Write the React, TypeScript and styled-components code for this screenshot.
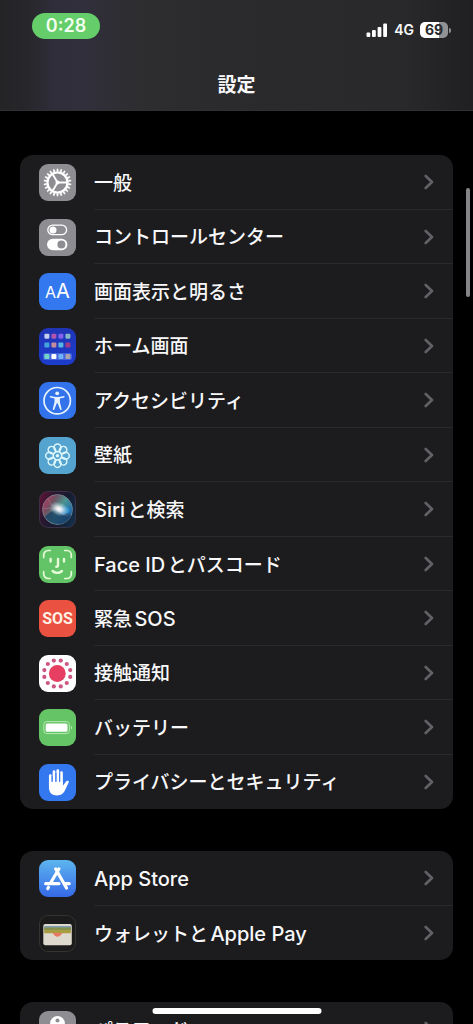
import React from "react";
import styled, { createGlobalStyle } from "styled-components";

const GlobalStyle = createGlobalStyle`
  * { box-sizing: border-box; }
  body {
    margin: 0;
    background: #000;
    color: #f8f8fa;
    font-family: Inter, "Noto Sans CJK JP", sans-serif;
    overflow: hidden;
  }
`;

const Screen = styled.div`
  position: relative;
  display: flex;
  flex-direction: column;
  height: 100vh;
  overflow: hidden;
`;

const Header = styled.header`
  flex: none;
  padding: 13px 22px 11px 32px;
  border-bottom: 1px solid #303033;
  background: linear-gradient(
    90deg,
    #242427 0%,
    #27272b 6%,
    #2e2d39 11%,
    #312f3c 17%,
    #2f2e34 24%,
    #2d2d2f 32%,
    #2a2a2c 55%,
    #29292b 85%,
    #202022 100%
  );
`;

const StatusBar = styled.div`
  display: flex;
  align-items: center;
  justify-content: space-between;
`;

const TimePill = styled.time`
  width: 68px;
  border-radius: 13px;
  background: #65cd69;
  color: #f2fff0;
  font-size: 18px;
  font-weight: 600;
  line-height: 26px;
  text-align: center;
`;

const StatusIcons = styled.div`
  display: flex;
  align-items: center;
  gap: 6px;
  padding-top: 8px;
  font-size: 14px;
  font-weight: 600;
  line-height: 18px;
`;

const Battery = styled.div`
  display: flex;
  align-items: center;
  gap: 1px;
`;

const BatteryLevel = styled.span`
  width: 28px;
  border-radius: 5px;
  background: linear-gradient(90deg, #fff 69%, #929294 69%);
  color: #29292b;
  font-weight: 700;
  line-height: 16px;
  text-align: center;
`;

const BatteryTip = styled.span`
  width: 2px;
  height: 5px;
  border-radius: 0 2px 2px 0;
  background: #929294;
`;

const Title = styled.h1`
  margin: 34px 10px 0 0;
  font-size: 19px;
  font-weight: 700;
  line-height: 26px;
  text-align: center;
`;

const Content = styled.main`
  display: flex;
  flex: 1;
  flex-direction: column;
  gap: 42px;
  min-height: 0;
  overflow: hidden;
  padding: 44px 20px 0;
`;

const Group = styled.ul`
  flex: none;
  margin: 0;
  padding: 0;
  border-radius: 13px;
  background: #1c1c1e;
  list-style: none;
  overflow: hidden;
`;

const Item = styled.li`
  height: 55px;

  &:nth-child(even) {
    height: 54px;
  }
`;

const RowLink = styled.a`
  display: flex;
  align-items: center;
  gap: 18px;
  height: 100%;
  padding-left: 19px;
  color: inherit;
  text-decoration: none;
`;

const RowBody = styled.span`
  display: flex;
  flex: 1;
  align-items: center;
  justify-content: space-between;
  height: 100%;
  padding-right: 19px;
  border-bottom: 1px solid #29292b;

  li:last-child & {
    border-bottom-color: transparent;
  }
`;

const Label = styled.span`
  padding-top: 3px;
  font-size: 19px;
  font-weight: 500;
  line-height: 28px;
  white-space: nowrap;
  text-autospace: normal;
`;

const Latin = styled.span`
  font-size: 20px;
`;

const Tile = styled.span<{ $bg: string; $edge?: string }>`
  flex: none;
  width: 37px;
  height: 37px;
  border-radius: 9px;
  background: ${(p) => p.$bg};
  box-shadow: ${(p) => (p.$edge ? `inset 0 0 0 1px ${p.$edge}` : "none")};
  overflow: hidden;

  svg {
    display: block;
  }
`;

const TileText = styled.span`
  display: flex;
  align-items: baseline;
  justify-content: center;
  color: #fff;
  line-height: 37px;
`;

const Sos = styled(TileText)`
  color: #fff0e4;
  font-family: Roboto, sans-serif;
  font-size: 16px;
  font-weight: 700;
`;

const SmallA = styled.span`
  font-size: 16px;
`;

const LargeA = styled.span`
  font-size: 20px;
`;

const ScrollThumb = styled.div`
  position: absolute;
  top: 188px;
  right: 3px;
  width: 4px;
  height: 109px;
  border-radius: 2px;
  background: #858587;
`;

const HomeIndicator = styled.div`
  position: absolute;
  bottom: 10px;
  left: 50%;
  width: 169px;
  height: 6px;
  border-radius: 3px;
  background: #fff;
  transform: translateX(-50%);
`;

const Drawing = ({ children }: { children: React.ReactNode }) => (
  <svg width="37" height="37" viewBox="0 0 37 37" fill="none" aria-hidden="true">
    {children}
  </svg>
);

const ring = (count: number, radius: number, cx = 18.5, cy = 18.5) =>
  Array.from({ length: count }, (_, i) => {
    const a = ((i + 0.5) * 2 * Math.PI) / count;
    return { x: cx + radius * Math.cos(a), y: cy + radius * Math.sin(a) };
  });

const GeneralIcon = () => (
  <Tile $bg="#8d8d92">
    <Drawing>
      {ring(22, 1).map((_, i) => (
        <path
          key={i}
          d="M17.7 7.6 18 4.9h1l.3 2.7z"
          fill="#fff"
          stroke="#fff"
          strokeWidth=".5"
          transform={`rotate(${(i * 360) / 22} 18.5 18.5)`}
        />
      ))}
      <circle cx="18.5" cy="18.5" r="10" stroke="#fff" strokeWidth="2.2" />
      <path d="M18.5 18.5H28M18.5 18.5 13.6 10M18.5 18.5 13.6 27" stroke="#fff" strokeWidth="1.8" />
      <circle cx="18.5" cy="18.5" r="2" fill="#fff" />
    </Drawing>
  </Tile>
);

const ControlIcon = () => (
  <Tile $bg="#8d8d92">
    <Drawing>
      <rect x="8.8" y="6.1" width="18.8" height="9.6" rx="4.8" stroke="#fff" strokeWidth="1.3" />
      <circle cx="14" cy="10.9" r="3.5" fill="#fff" />
      <rect x="8" y="19.7" width="20.4" height="11.6" rx="5.8" fill="#fff" />
      <circle cx="22.4" cy="25.5" r="4" fill="#8d8d92" />
    </Drawing>
  </Tile>
);

const DisplayIcon = () => (
  <Tile $bg="#3478f0">
    <TileText>
      <SmallA>A</SmallA>
      <LargeA>A</LargeA>
    </TileText>
  </Tile>
);

const HOME_DOTS = [
  ["#c5d0f0", "#b254ae", "#8263ee", "#85b8c7"],
  ["#42a3df", "#c48b9b", "#56b7e1", "#a13c88"],
  ["#73d6c8", "#ffffff", "#70b2f5", "#aba4ad"],
];

const HomeIcon = () => (
  <Tile $bg="linear-gradient(#2034b5, #1c3ccc)">
    <Drawing>
      <rect x="4" y="25" width="29" height="7" rx="2" fill="#4463df" />
      {HOME_DOTS.map((row, r) =>
        row.map((c, i) => (
          <rect key={`${r}-${i}`} x={5.4 + i * 7} y={[5.7, 14.5, 26][r]} width="5" height="5" rx="1.1" fill={c} />
        )),
      )}
    </Drawing>
  </Tile>
);

const AccessibilityIcon = () => (
  <Tile $bg="#3272ea">
    <Drawing>
      <circle cx="18.2" cy="18.7" r="13.2" stroke="#e4f2ff" strokeWidth="1.7" />
      <circle cx="18.2" cy="11.3" r="1.9" fill="#e4f2ff" />
      <path
        d="M11.6 14.1c2.2.6 4.4.8 6.6.8s4.4-.2 6.6-.8c.9-.2 1.2 1 .4 1.3l-4.3 1.2v3.5l1.7 7c.2 1-1.2 1.4-1.5.4l-2.5-6.3h-.8l-2.5 6.3c-.3 1-1.7.6-1.5-.4l1.7-7v-3.5l-4.3-1.2c-.8-.3-.5-1.5.4-1.3z"
        fill="#e4f2ff"
      />
    </Drawing>
  </Tile>
);

const WallpaperIcon = () => (
  <Tile $bg="#55a3cf">
    <Drawing>
      {Array.from({ length: 8 }, (_, i) => (
        <ellipse
          key={i}
          cx="18.5"
          cy="10.8"
          rx="3.5"
          ry="3.9"
          stroke="#dcf7fb"
          strokeWidth="1.5"
          transform={`rotate(${i * 45} 18.5 18.7)`}
        />
      ))}
      <circle cx="18.5" cy="18.7" r="4.2" stroke="#dcf7fb" strokeWidth="1.3" />
      <circle cx="18.5" cy="18.7" r="1.8" fill="#dcf7fb" />
    </Drawing>
  </Tile>
);

const SiriIcon = () => (
  <Tile $bg="linear-gradient(115deg, #6d1237 0%, #2b1730 30%, #151c30 60%, #113452 100%)" $edge="#3b3046">
    <Drawing>
      <defs>
        <linearGradient id="siriOrb" x1="3" y1="8" x2="34" y2="28" gradientUnits="userSpaceOnUse">
          <stop offset="0" stopColor="#c22e58" />
          <stop offset=".3" stopColor="#6b5463" />
          <stop offset=".55" stopColor="#4b9590" />
          <stop offset=".8" stopColor="#2473ac" />
          <stop offset="1" stopColor="#15477c" />
        </linearGradient>
        <radialGradient id="siriGlow">
          <stop offset="0" stopColor="#fff" />
          <stop offset=".3" stopColor="#f6f2f6" stopOpacity=".85" />
          <stop offset="1" stopColor="#a8d4df" stopOpacity="0" />
        </radialGradient>
      </defs>
      <circle cx="18.5" cy="18.5" r="15" fill="url(#siriOrb)" stroke="#798391" strokeWidth=".8" />
      <path d="M6 26c5-6 9-7 13-7s9 2 13 6c-4 7-9 8-13 8-6 0-10-3-13-7z" fill="#183d62" opacity=".8" />
      <path d="M18 19c5-5 10-5 13 0-3 6-9 6-13 0z" fill="#3295d5" opacity=".8" />
      <path d="M4 18c8-2 12 0 16 2 3 3 6 5 10 4M9 8c3 6 6 9 12 11" stroke="#c294ab" strokeWidth=".9" opacity=".4" />
      <ellipse cx="20" cy="18" rx="10" ry="7" fill="url(#siriGlow)" transform="rotate(22 20 18)" />
    </Drawing>
  </Tile>
);

const FaceIdIcon = () => (
  <Tile $bg="#62c466">
    <Drawing>
      <g stroke="#e8fbd9" strokeLinecap="round">
        <path
          d="M4.7 11.5V9a4.5 4.5 0 0 1 4.5-4.500h2M25.8 4.5h2A4.5 4.5 0 0 1 32.3 9v2.5M32.3 25.5V28a4.5 4.5 0 0 1-4.5 4.5h-2M11.2 32.5h-2A4.5 4.5 0 0 1 4.7 28v-2.5"
          strokeWidth="1.7"
        />
        <path d="M11.6 13v2.500M25 13v2.500M19 13v6.300c0 1-.5 1.500-1.700 1.500M13.600 25c2.800 2.500 6.600 2.500 9.400 0" strokeWidth="2.4" />
      </g>
    </Drawing>
  </Tile>
);

const SosIcon = () => (
  <Tile $bg="#ea5140">
    <Sos>SOS</Sos>
  </Tile>
);

const ExposureIcon = () => (
  <Tile $bg="#fff">
    <Drawing>
      <circle cx="18.3" cy="18.5" r="8.4" fill="#e63f61" />
      {ring(12, 13.4, 18.3, 18.5).map((p, i) => (
        <circle key={i} cx={p.x} cy={p.y} r="2.1" fill="#cc5582" />
      ))}
    </Drawing>
  </Tile>
);

const BatteryIcon = () => (
  <Tile $bg="#65c466">
    <Drawing>
      <rect x="4.8" y="12.6" width="25.6" height="12" rx="3" stroke="#b7e8b1" strokeWidth="1" />
      <rect x="6.7" y="14.4" width="21.8" height="8.4" rx="1.5" fill="#fff" />
      <path d="M32 16.700c1.600.6 1.600 3.200 0 3.800z" fill="#b7e8b1" />
    </Drawing>
  </Tile>
);

const PrivacyIcon = () => (
  <Tile $bg="#3478f0">
    <Drawing>
      <path d="M11.3 11.5V21M15 7.5V19M18.8 6.5V19M22.5 8.5V20" stroke="#fff" strokeWidth="2.7" strokeLinecap="round" />
      <path
        d="M9.95 17.5h13.9v4.3l3.4-4.500c.9-1.200 3.100-.7 2.500.9l-3.500 7.600c-1.800 4-4.200 5.700-8.200 5.700-5.200 0-8.100-3-8.100-8z"
        fill="#fff"
      />
      <path d="M13.15 12v6M16.9 9v9M20.65 9v9" stroke="#3478f0" strokeWidth=".9" />
    </Drawing>
  </Tile>
);

const AppStoreIcon = () => (
  <Tile $bg="linear-gradient(#5db5ee, #3569e8)">
    <Drawing>
      <path
        d="M19.900 9 12 22.300M16.700 9l10.800 19M6.700 23.700h13.200M26.300 23.700h3.900M9.500 27.300l-.7 1.200"
        stroke="#fff"
        strokeWidth="3.2"
        strokeLinecap="round"
      />
    </Drawing>
  </Tile>
);

const WalletIcon = () => (
  <Tile $bg="#1b1b1c" $edge="#343330">
    <Drawing>
      <rect x="4.3" y="9" width="28.5" height="21.3" rx="2" fill="#ddd9cf" />
      <path d="M5.2 11h26.7v3H5.2z" fill="#7e9cad" />
      <path d="M5.2 12.5h26.7v3.3H5.2z" fill="#85914d" />
      <path d="M5.2 15.2h26.7v3H5.2z" fill="#aa9d40" />
      <path d="M13.5 18.1h10c-1 .5-1.600 3.600-5 3.600s-4-3.100-5-3.600z" fill="#e87763" />
    </Drawing>
  </Tile>
);

const PasswordIcon = () => (
  <Tile $bg="#8d8d92">
    <Drawing>
      <circle cx="18.5" cy="12.5" r="7.4" fill="#fff" />
      <circle cx="18.5" cy="9.5" r="2" fill="#8d8d92" />
      <path d="M15.5 18h6v12l-3 3-3-3z" fill="#fff" />
    </Drawing>
  </Tile>
);

const Chevron = () => (
  <svg width="10" height="16" viewBox="0 0 10 16" fill="none" aria-hidden="true">
    <path d="M1.700 2 8 8l-6.300 6" stroke="#626266" strokeWidth="2.6" strokeLinecap="round" strokeLinejoin="round" />
  </svg>
);

const Signal = () => (
  <svg width="22" height="15" viewBox="0 0 22 15" fill="#fff" aria-hidden="true">
    <rect x="0.5" y="9.5" width="3.8" height="4.5" rx="1" />
    <rect x="6" y="7" width="3.8" height="7" rx="1" />
    <rect x="11.6" y="4" width="3.8" height="10" rx="1" />
    <rect x="17.2" y="0.5" width="3.8" height="13.5" rx="1" />
  </svg>
);

// Latin runs are set one size larger than the kana and kanji around them.
const MixedText = ({ text }: { text: string }) => (
  <>
    {text
      .split(/([A-Za-z][A-Za-z ]*)/)
      .filter(Boolean)
      .map((run, i) => (/^[A-Za-z]/.test(run) ? <Latin key={i}>{run}</Latin> : run))}
  </>
);

const GROUPS: { label: string; Icon: React.FC }[][] = [
  [
    { label: "一般", Icon: GeneralIcon },
    { label: "コントロールセンター", Icon: ControlIcon },
    { label: "画面表示と明るさ", Icon: DisplayIcon },
    { label: "ホーム画面", Icon: HomeIcon },
    { label: "アクセシビリティ", Icon: AccessibilityIcon },
    { label: "壁紙", Icon: WallpaperIcon },
    { label: "Siriと検索", Icon: SiriIcon },
    { label: "Face IDとパスコード", Icon: FaceIdIcon },
    { label: "緊急SOS", Icon: SosIcon },
    { label: "接触通知", Icon: ExposureIcon },
    { label: "バッテリー", Icon: BatteryIcon },
    { label: "プライバシーとセキュリティ", Icon: PrivacyIcon },
  ],
  [
    { label: "App Store", Icon: AppStoreIcon },
    { label: "ウォレットとApple Pay", Icon: WalletIcon },
  ],
  [{ label: "パスワード", Icon: PasswordIcon }],
];

export default function App() {
  return (
    <>
      <GlobalStyle />
      <Screen lang="ja">
        <Header>
          <StatusBar>
            <TimePill>0:28</TimePill>
            <StatusIcons>
              <Signal />
              <span>4G</span>
              <Battery>
                <BatteryLevel>69</BatteryLevel>
                <BatteryTip />
              </Battery>
            </StatusIcons>
          </StatusBar>
          <Title>設定</Title>
        </Header>
        <Content>
          {GROUPS.map((items, g) => (
            <Group key={g}>
              {items.map(({ label, Icon }) => (
                <Item key={label}>
                  <RowLink href="#">
                    <Icon />
                    <RowBody>
                      <Label>
                        <MixedText text={label} />
                      </Label>
                      <Chevron />
                    </RowBody>
                  </RowLink>
                </Item>
              ))}
            </Group>
          ))}
        </Content>
        <ScrollThumb />
        <HomeIndicator />
      </Screen>
    </>
  );
}
